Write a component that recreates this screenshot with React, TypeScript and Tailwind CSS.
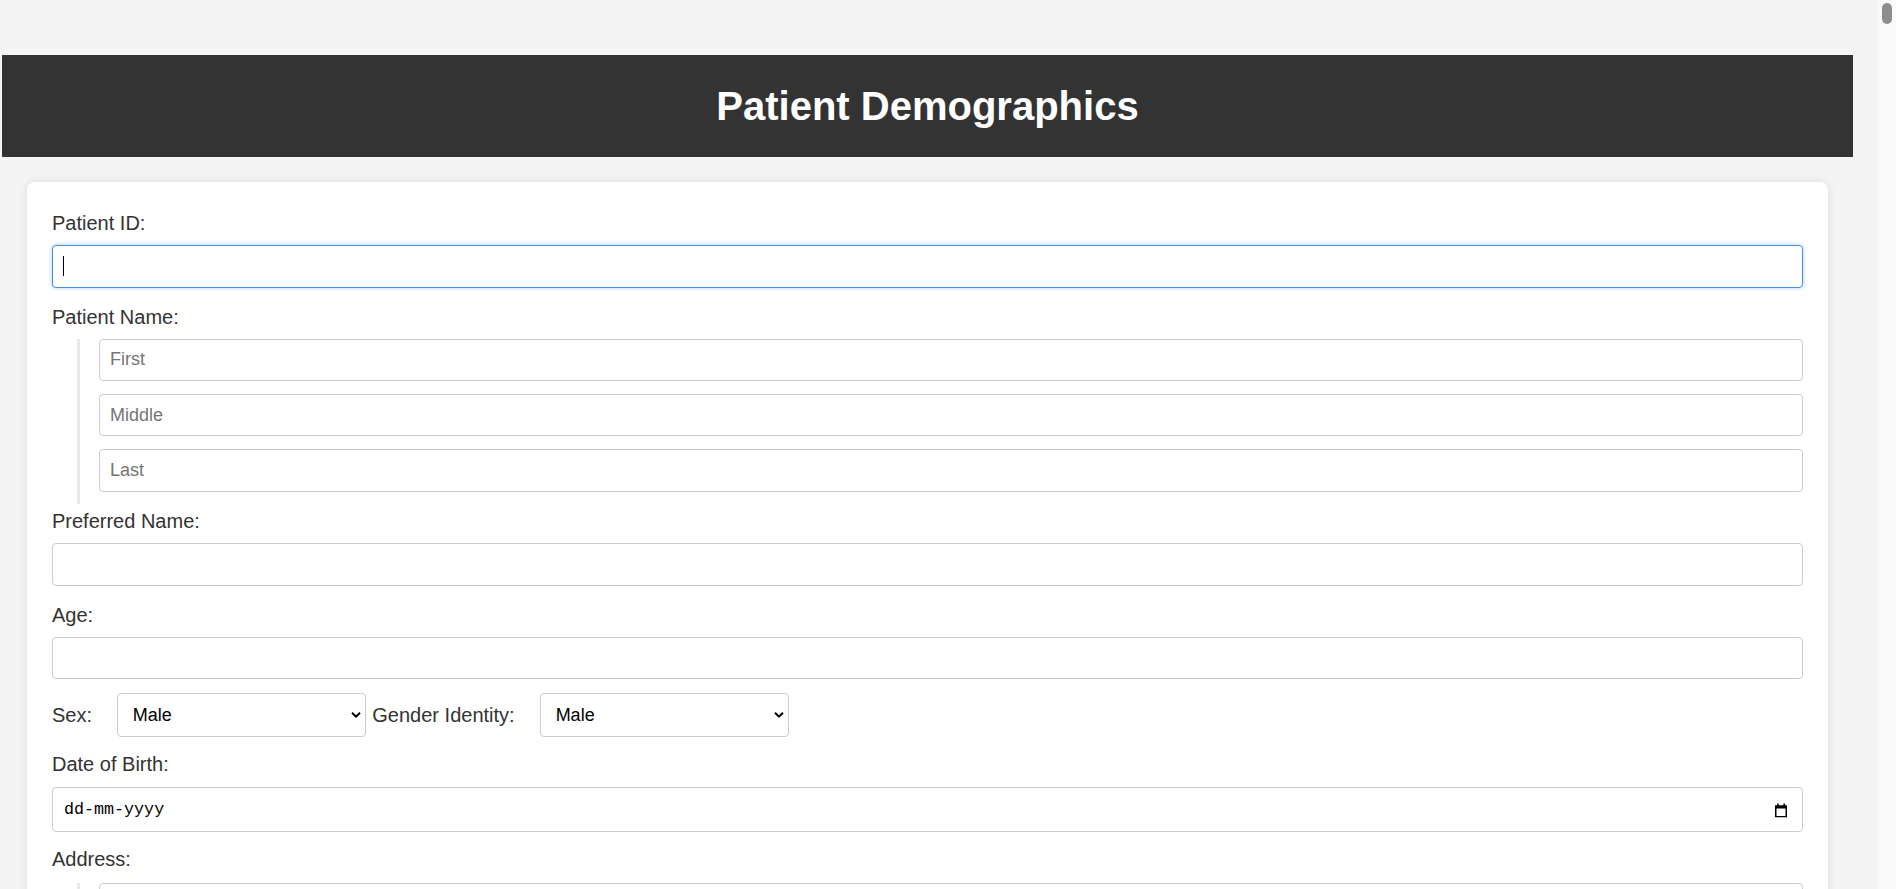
import React from "react";

const font = "font-['Liberation_Sans',Arial,Helvetica,sans-serif]";

function Label({ children, className = "" }: { children: React.ReactNode; className?: string }) {
  return <label className={`block text-[20px] leading-[23px] h-[23px] text-[#333] ${className}`}>{children}</label>;
}

function TextInput({ placeholder, className = "" }: { placeholder?: string; className?: string }) {
  return (
    <input
      type="text"
      placeholder={placeholder}
      className={`block w-full h-[42.67px] px-[10px] text-[18px] text-black bg-white border border-[#ccc] rounded-[4px] outline-none placeholder:text-[#757575] ${className}`}
    />
  );
}

function Chevron() {
  return (
    <svg width="10" height="7" viewBox="0 0 10 7" className="pointer-events-none absolute right-[5px] top-1/2 -translate-y-1/2">
      <path d="M1 1.2 L5 5.2 L9 1.2" fill="none" stroke="#000" strokeWidth="2" />
    </svg>
  );
}

function Select({ className = "" }: { className?: string }) {
  return (
    <div className={`relative w-[249px] h-[43.4px] ${className}`}>
      <select
        defaultValue="Male"
        className="appearance-none w-full h-full pl-[15px] pr-[20px] text-[18px] text-black bg-white border border-[#ccc] rounded-[4px] outline-none"
      >
        <option>Male</option>
        <option>Female</option>
        <option>Other</option>
      </select>
      <Chevron />
    </div>
  );
}

function Group({ children }: { children: React.ReactNode }) {
  return (
    <div className="ml-[25px] border-l-[3px] border-[#e8e8e8] pl-[19px] pb-[12.5px] flex flex-col gap-[12.5px]">
      {children}
    </div>
  );
}

export default function App() {
  return (
    <div className={`flex h-screen w-full overflow-hidden bg-[#f4f4f4] ${font}`}>
      <div className="flex-1 min-w-0 overflow-hidden pt-[55px]">
        <header className="ml-[2px] w-[1851px] h-[102px] bg-[#333] flex items-center justify-center">
          <h1 className="text-[40px] leading-[46px] font-bold text-white">Patient Demographics</h1>
        </header>

        <form className="ml-[27px] mt-[25px] w-[1801px] bg-white rounded-[8px] shadow-[0_0_10px_rgba(0,0,0,0.1)] px-[25px] pt-[30px] pb-[30px] flex flex-col">
          <Label className="mb-[10px]">Patient ID:</Label>
          <div className="relative mb-[18px]">
            <input
              type="text"
              className="block w-full h-[42.67px] px-[10px] text-[18px] text-black bg-white border border-[#4a90e2] rounded-[4px] outline-none shadow-[0_0_4px_rgba(74,144,226,0.45)]"
            />
            <span className="absolute left-[11px] top-[11px] h-[20px] w-[1px] bg-black" />
          </div>

          <Label className="mb-[10px]">Patient Name:</Label>
          <Group>
            <TextInput placeholder="First" />
            <TextInput placeholder="Middle" />
            <TextInput placeholder="Last" />
          </Group>

          <Label className="mt-[6px] mb-[10px]">Preferred Name:</Label>
          <TextInput className="mb-[18px]" />

          <Label className="mb-[10px]">Age:</Label>
          <TextInput className="mb-[14px]" />

          <div className="flex items-center mb-[16.5px]">
            <Label>Sex:</Label>
            <Select className="ml-[24.7px]" />
            <Label className="ml-[6.6px]">Gender Identity:</Label>
            <Select className="ml-[25px]" />
          </div>

          <Label className="mb-[11px]">Date of Birth:</Label>
          <div className="relative flex items-center w-full h-[44.4px] pl-[11px] mb-[16px] bg-white border border-[#ccc] rounded-[4px]">
            <span className="font-['Liberation_Mono','DejaVu_Sans_Mono',monospace] text-[16.7px] text-black">dd-mm-yyyy</span>
            <svg width="14" height="15" viewBox="0 0 14 15" className="absolute right-[14px] top-1/2 -translate-y-1/2">
              <rect x="1.75" y="3.75" width="10.5" height="10.5" fill="none" stroke="#000" strokeWidth="1.5" />
              <rect x="1" y="3" width="12" height="3" fill="#000" />
              <rect x="3" y="1" width="1.6" height="3" fill="#000" />
              <rect x="9.4" y="1" width="1.6" height="3" fill="#000" />
            </svg>
          </div>

          <Label className="mb-[12.5px]">Address:</Label>
          <Group>
            <TextInput placeholder="Street" />
            <TextInput placeholder="City" />
            <TextInput placeholder="State" />
            <TextInput placeholder="ZIP Code" />
          </Group>
        </form>
      </div>

      <div className="w-[18px] shrink-0 bg-[#fafafa] pt-[3px] pl-[4px]">
        <div className="w-[10px] h-[21px] rounded-full bg-[#8d8d8d]" />
      </div>
    </div>
  );
}
